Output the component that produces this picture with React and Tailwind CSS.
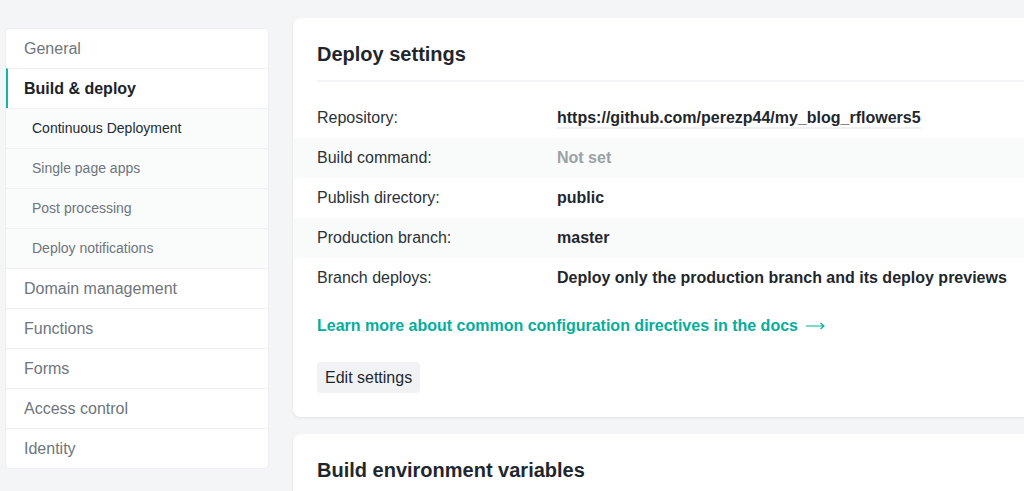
const navItems = [
  { label: 'General' },
  { label: 'Build & deploy', active: true },
  { label: 'Continuous Deployment', sub: true, current: true },
  { label: 'Single page apps', sub: true },
  { label: 'Post processing', sub: true },
  { label: 'Deploy notifications', sub: true },
  { label: 'Domain management' },
  { label: 'Functions' },
  { label: 'Forms' },
  { label: 'Access control' },
  { label: 'Identity' },
]

const settings = [
  { label: 'Repository:', value: 'https://github.com/perezp44/my_blog_rflowers5', link: true },
  { label: 'Build command:', value: 'Not set', muted: true },
  { label: 'Publish directory:', value: 'public' },
  { label: 'Production branch:', value: 'master' },
  { label: 'Branch deploys:', value: 'Deploy only the production branch and its deploy previews' },
]

function navClass(item) {
  if (item.active) return 'border-l-2 border-l-[#15b4a3] pl-4 text-[16px] font-bold text-[#1c2329]'
  if (item.current) return 'bg-[#fafbfb] pl-[26px] text-[14px] text-[#222b33]'
  if (item.sub) return 'bg-[#fafbfb] pl-[26px] text-[14px] text-[#6e757c]'
  return 'pl-[18px] text-[16px] text-[#6e757c]'
}

function Sidebar() {
  return (
    <nav className="mt-[29px] ml-[6px] w-[262px] shrink-0 bg-white rounded-[4px] shadow-[0_0_0_1px_#eceff0] overflow-hidden">
      {navItems.map((item, i) => (
        <div
          key={item.label}
          className={`flex items-center ${i > 0 ? 'h-10 border-t border-[#eef0f1]' : 'h-[39px]'} ${navClass(item)}`}
        >
          {item.label}
        </div>
      ))}
    </nav>
  )
}

function DeploySettings() {
  return (
    <section className="bg-white rounded-[8px] shadow-[0_1px_3px_rgba(0,0,0,0.08)] pt-6 pb-6">
      <div className="mx-6 pb-[14px] border-b-2 border-[#f3f4f5]">
        <h2 className="text-[20px] leading-6 font-bold text-[#1f272e]">Deploy settings</h2>
      </div>
      <div className="mt-4">
        {settings.map((row, i) => (
          <div
            key={row.label}
            className={`h-10 flex items-center px-6 text-[16px] ${i % 2 === 1 ? 'bg-[#f9fafa]' : ''}`}
          >
            <div className="w-[240px] text-[#2a3238]">{row.label}</div>
            <div
              className={`font-bold ${row.muted ? 'text-[#9ca1a5]' : 'text-[#1f272e]'} ${
                row.link ? 'border-b-2 border-[#eef0f1] leading-[19px]' : ''
              }`}
            >
              {row.value}
            </div>
          </div>
        ))}
      </div>
      <div className="px-6 mt-[18px] h-5 flex items-center">
        <a className="flex items-center gap-2 text-[16px] leading-5 font-bold text-[#05ad9c]">
          Learn more about common configuration directives in the docs
          <svg width="19" height="8" viewBox="0 0 19 8" fill="none" stroke="currentColor" strokeWidth="1.2">
            <path d="M0 4h18M14.5 1l3.5 3-3.5 3" />
          </svg>
        </a>
      </div>
      <div className="px-6 mt-[26px] leading-none">
        <button className="h-[31px] px-2 rounded-[4px] bg-[#f1f2f3] text-[16px] text-[#1f272e]">Edit settings</button>
      </div>
    </section>
  )
}

export default function App() {
  return (
    <div
      className="w-[1024px] h-[491px] overflow-hidden bg-[#f3f5f6] flex items-start gap-[25px]"
      style={{ fontFamily: '"Liberation Sans", Arial, sans-serif' }}
    >
      <Sidebar />
      <main className="mt-[18px] w-[760px] shrink-0 flex flex-col gap-[17px]">
        <DeploySettings />
        <section className="bg-white rounded-[8px] shadow-[0_1px_3px_rgba(0,0,0,0.08)] pt-6 pb-6 px-6">
          <h2 className="text-[20px] leading-6 font-bold text-[#1f272e]">Build environment variables</h2>
        </section>
      </main>
    </div>
  )
}
